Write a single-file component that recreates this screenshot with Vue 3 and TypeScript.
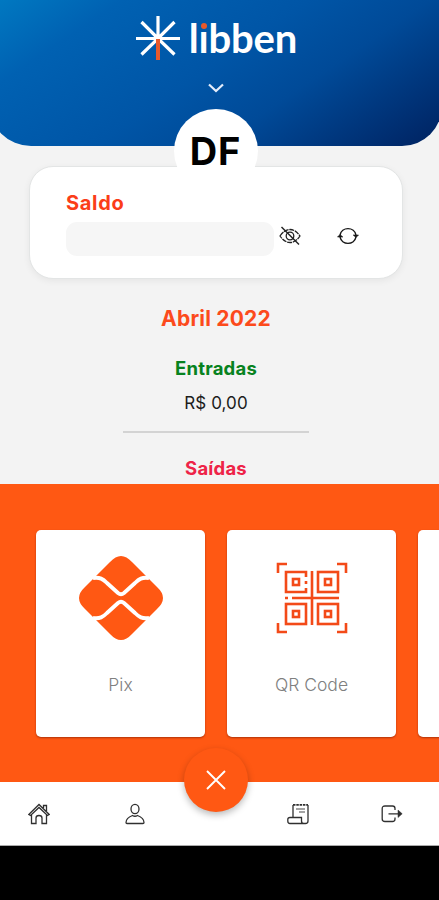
<script setup lang="ts">
interface Shortcut {
  id: string
  label: string
}

const shortcuts: Shortcut[] = [
  { id: 'pix', label: 'Pix' },
  { id: 'qr', label: 'QR Code' },
  { id: 'more', label: '' },
]

const qrModules = [
  { x: 10, y: 10 },
  { x: 42, y: 10 },
  { x: 10, y: 42 },
  { x: 42, y: 42 },
]
</script>

<template>
  <div class="screen">
    <header class="header">
      <div class="brand">
        <svg class="brand-mark" viewBox="0 0 44 46" fill="none" stroke="#fff" stroke-width="3.2">
          <path d="M22 1V22M0 23.500H44M5.500 7L22 23.500L38.500 7M5.500 39.500L22 23.500L38.500 39.500" />
          <path d="M22 24V45" stroke="#e8592b" stroke-width="4" />
        </svg>
        <span class="brand-name">l<span class="dotted">ı</span>bben</span>
      </div>
      <svg class="chevron" viewBox="0 0 16 10" fill="none" stroke="#e4edfb" stroke-width="2.2">
        <path d="M1 1.500L8 8L15 1.500" />
      </svg>
      <div class="avatar">DF</div>
    </header>

    <main class="content">
      <section class="balance">
        <h2 class="balance-title">Saldo</h2>
        <div class="balance-row">
          <div class="balance-value"></div>
          <svg class="eye" viewBox="0 0 22 20" fill="none" stroke="#222" stroke-width="1.300">
            <path d="M1 10Q5.500 3.500 11 3.500Q16.500 3.500 21 10Q16.500 16.500 11 16.500Q5.500 16.500 1 10Z" stroke-dasharray="5 .8" />
            <circle cx="11" cy="10" r="3.800" />
            <path d="M2.500 1L20 18.500" stroke-width="1.500" />
          </svg>
          <svg class="refresh" viewBox="0 0 22 20" fill="none" stroke="#161616" stroke-width="1.400">
            <path d="M3 9A8.200 8.200 0 0 1 19 9M19 11A8.200 8.200 0 0 1 3 11" />
            <path d="M.5 11L3 8.500L5.800 11ZM16.200 9L19 11.500L21.500 9Z" fill="#161616" stroke-width=".6" />
          </svg>
        </div>
      </section>

      <section class="summary">
        <h2 class="month">Abril 2022</h2>
        <h3 class="entry income">Entradas</h3>
        <p class="amount">R$ 0,00</p>
        <hr class="divider" />
        <h3 class="entry outcome">Saídas</h3>
      </section>
    </main>

    <section class="shortcuts">
      <article v-for="item in shortcuts" :key="item.id" class="tile">
        <svg v-if="item.id === 'pix'" class="pix" viewBox="0 0 84 84" fill="none" stroke="#fff" stroke-width="3.800">
          <path d="M31 6Q42-6 53 6L78 31Q90 42 78 53L53 78Q42 90 31 78L6 53Q-6 42 6 31Z" fill="#ff5813" stroke="none" />
          <path d="M14 22C21 21 24 23 28 27L39 37Q42 39.500 45 37L56 27C60 23 63 21 70 22" />
          <path d="M14 62C21 63 24 61 28 57L39 47Q42 44.500 45 47L56 57C60 61 63 63 70 62" />
        </svg>
        <svg v-else-if="item.id === 'qr'" class="qr" viewBox="0 0 72 72" fill="none" stroke="#f34a18" stroke-width="2.600">
          <path d="M2 11V2H11M61 2H70V11M70 61V70H61M11 70H2V61" />
          <g v-for="(module, index) in qrModules" :key="index">
            <path v-if="index === 0" d="M30 15V10H10V30H30V26M30 19V22" />
            <rect v-else :x="module.x" :y="module.y" width="20" height="20" />
            <rect :x="module.x + 7" :y="module.y + 7" width="6" height="6" />
          </g>
          <path d="M36 9V63M16 36H63M9 36H12" />
        </svg>
        <span class="tile-label">{{ item.label }}</span>
      </article>
    </section>

    <nav class="nav">
      <svg class="nav-icon" viewBox="0 0 22 22" fill="none" stroke="#303030" stroke-width="1.300">
        <path d="M.8 11.500L11 1.500L21.200 11.500L19.500 12.500L11 4.500L2.500 12.500ZM15.500 5V2.500H18.500V8M3.500 12V20.500H8V15Q8 12.500 11 12.500Q14 12.500 14 15V20.500H18.500V12" />
      </svg>
      <svg class="nav-icon" viewBox="0 0 22 22" fill="none" stroke="#303030" stroke-width="1.300">
        <ellipse cx="11" cy="6" rx="4" ry="4.700" />
        <path d="M2 19.500C2 15.500 6 13.500 8.500 12.500Q11 14 13.500 12.500C16 13.500 20 15.500 20 19.500Q20 20.500 19 20.500H3Q2 20.500 2 19.500Z" />
      </svg>
      <button class="close" type="button" aria-label="Fechar">
        <svg viewBox="0 0 20 20" fill="none" stroke="#fff" stroke-width="1.900">
          <path d="M1 1L19 19M19 1L1 19" />
        </svg>
      </button>
      <svg class="nav-icon" viewBox="0 0 22 22" fill="none" stroke="#303030" stroke-width="1.300">
        <path d="M6 14V2M21 2V18Q21 20.500 18.500 20.500H3Q.8 20.500 .8 18V16.500Q.8 14.500 3 14.500H14.500V18Q14.500 20.500 17 20.500" />
        <path d="M6 1.800H21" stroke-width="1.800" stroke-dasharray="2.500 .8" />
        <path d="M9 6H18M12 9H18" stroke="#858585" />
      </svg>
      <svg class="nav-icon" viewBox="0 0 22 22" fill="none" stroke="#303030" stroke-width="1.300">
        <path d="M14 7V5.500Q14 3 11.500 3H4Q1.200 3 1.200 5.500V16Q1.200 18.500 4 18.500H11.500Q14 18.500 14 16V14.500M7.500 10.800H20" />
        <path d="M17 7L21.200 10.800L17 14.500Z" fill="#303030" stroke-width=".5" />
      </svg>
    </nav>
    <div class="system-bar"></div>
  </div>
</template>

<style>
body {
  margin: 0;
}
</style>

<style scoped>
.screen {
  display: flex;
  flex-direction: column;
  width: 439px;
  height: 900px;
  overflow: hidden;
  background: #f3f3f3;
  font-family: Inter, "Liberation Sans", sans-serif;
}

h2,
h3,
p {
  margin: 0;
}

.header {
  z-index: 1;
  display: flex;
  flex: none;
  flex-direction: column;
  align-items: center;
  box-sizing: border-box;
  width: 453px;
  height: 146px;
  margin-left: -11px;
  padding-top: 15px;
  border-radius: 0 0 40px 42px;
  background: linear-gradient(146deg, #007ac2 0%, #0061b2 20%, #0055a6 48%, #004a98 66%, #002b6d 92%, #00225f 100%);
}

.brand {
  display: flex;
  align-items: center;
  gap: 9px;
  height: 46px;
  margin-left: 2px;
}

.brand-mark {
  width: 44px;
  height: 46px;
}

.brand-name {
  color: #fff;
  font-family: Lato, sans-serif;
  font-size: 40px;
  font-weight: 700;
  line-height: 48px;
  letter-spacing: -0.2px;
}

.dotted {
  position: relative;
}

.dotted::after {
  position: absolute;
  top: 9px;
  left: 2px;
  width: 6px;
  height: 6px;
  border-radius: 50%;
  background: #e8592b;
  content: "";
}

.chevron {
  flex: none;
  width: 16px;
  height: 10px;
  margin-top: 22px;
}

.avatar {
  flex: none;
  width: 84px;
  height: 84px;
  margin-top: 16px;
  border-radius: 50%;
  background: #fff;
  color: #000;
  font-size: 38px;
  font-weight: 700;
  line-height: 84px;
  letter-spacing: 1px;
  text-align: center;
}

.content {
  flex: 0 0 338px;
  box-sizing: border-box;
  width: 432px;
  padding: 20px 29px 0;
  overflow: hidden;
}

.balance {
  box-sizing: border-box;
  height: 113px;
  padding: 24px 36px;
  border: 1px solid #e3e5e5;
  border-radius: 24px;
  background: #fff;
  box-shadow: 0 2px 7px rgb(0 0 0 / 6%);
}

.balance-title {
  color: #fb3d18;
  font-size: 20px;
  line-height: 24px;
  letter-spacing: 0.7px;
}

.balance-row {
  display: flex;
  align-items: flex-start;
  margin-top: 7px;
}

.balance-value {
  width: 208px;
  height: 34px;
  border-radius: 11px;
  background: #f6f6f6;
}

.eye,
.refresh {
  width: 22px;
  height: 20px;
  margin-top: 4px;
}

.eye {
  margin-left: 5px;
}

.refresh {
  margin-left: 36px;
}

.summary {
  display: flex;
  flex-direction: column;
  align-items: center;
  padding-top: 26px;
}

.month {
  color: #fc4a1c;
  font-size: 21px;
  line-height: 28px;
  letter-spacing: 0.2px;
}

.entry {
  font-size: 18.5px;
  line-height: 24px;
  letter-spacing: 0.2px;
}

.income {
  margin-top: 23px;
  color: #078220;
}

.amount {
  margin-top: 12px;
  color: #1c1c1c;
  font-size: 17px;
  line-height: 22px;
  letter-spacing: 0.1px;
}

.divider {
  width: 186px;
  height: 2px;
  margin: 17px 0 23px;
  border: 0;
  background: #d3d3d3;
}

.outcome {
  color: #ee2347;
}

.shortcuts {
  display: flex;
  flex: 0 0 298px;
  gap: 22px;
  box-sizing: border-box;
  padding: 46px 0 0 36px;
  background: #ff5813;
}

.tile {
  display: flex;
  flex: 0 0 169px;
  flex-direction: column;
  align-items: center;
  height: 207px;
  border-radius: 5px;
  background: #fff;
  box-shadow: 0 1px 2px rgb(110 20 0 / 55%);
}

.pix {
  width: 84px;
  height: 84px;
  margin-top: 26px;
}

.qr {
  width: 72px;
  height: 72px;
  margin: 32px 0 6px;
}

.tile-label {
  margin-top: 33px;
  color: #808080;
  font-size: 17.5px;
  font-weight: 300;
  line-height: 24px;
}

.nav {
  z-index: 1;
  display: grid;
  flex: 0 0 64px;
  grid-template-columns: 78px 114px 48px 116px 72px;
  align-items: center;
  justify-items: center;
  box-sizing: border-box;
  border-bottom: 1px solid #aaa;
  background: #fff;
}

.nav-icon {
  width: 22px;
  height: 22px;
}

.close {
  display: grid;
  place-items: center;
  width: 64px;
  height: 64px;
  margin: -67px -8px 0;
  padding: 0;
  border: 0;
  border-radius: 50%;
  background: #ff5813;
  box-shadow: 0 3px 7px rgb(0 0 0 / 27%);
}

.close svg {
  width: 20px;
  height: 20px;
}

.system-bar {
  flex: 1;
  background: #000;
}
</style>
